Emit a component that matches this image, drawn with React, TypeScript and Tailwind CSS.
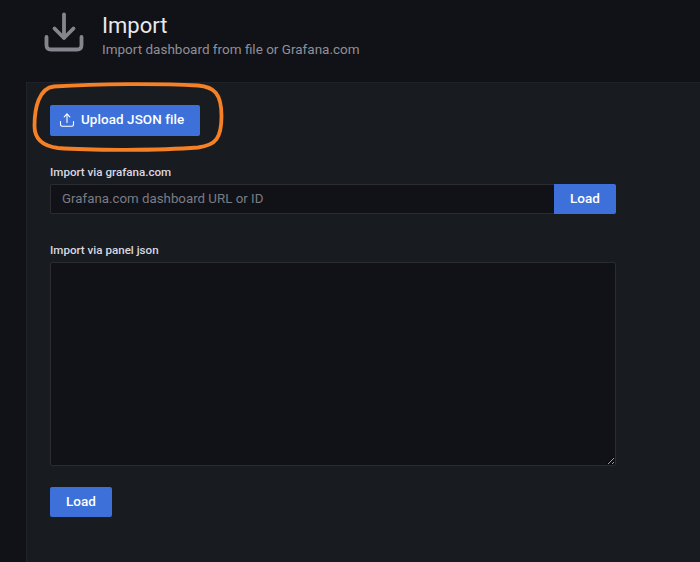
import React from 'react';

const Header = () => (
  <div className="h-[82px] flex items-start bg-[#111217] pl-[44px] pt-[12px]">
    <svg width="40" height="40" viewBox="0 0 40 40" fill="none" stroke="#85858d" strokeWidth="3.8" strokeLinecap="round" strokeLinejoin="round" className="shrink-0">
      <path d="M20 2.5V25.5" />
      <path d="M10.5 16.5L20 26L29.5 16.5" />
      <path d="M2.5 25V33C2.5 36 4 37.5 7 37.5H33C36 37.5 37.5 36 37.5 33V25" />
    </svg>
    <div className="ml-[18px] flex flex-col">
      <h1 className="text-[22px] leading-[28px] font-normal text-[#e8e9ed]">Import</h1>
      <p className="text-[13.5px] leading-[18px] text-[#8e9099]">Import dashboard from file or Grafana.com</p>
    </div>
  </div>
);

const LoadButton = ({ className }: { className: string }) => (
  <button className={`w-[62px] h-[30px] pb-[1px] bg-[#3d71d9] text-white text-[13.5px] font-medium ${className}`}>Load</button>
);

export default function App() {
  return (
    <div className="relative w-[700px] h-[562px] overflow-hidden bg-[#111217] font-['Roboto',sans-serif]">
      <Header />
      <div className="ml-[26px] h-[480px] bg-[#181b1f] border-t border-l border-[#1f2226] pl-[23px] pt-[22px]">
        <button className="w-[150px] h-[31px] flex items-center bg-[#3d71d9] rounded-[2px] pl-[9px] pb-[1px] text-white text-[13.4px] font-medium">
          <svg width="16" height="16" viewBox="0 0 16 16" fill="none" stroke="white" strokeWidth="1.1" strokeLinecap="round" strokeLinejoin="round">
            <path d="M8 2V10.5" />
            <path d="M5.2 4.8L8 2L10.8 4.8" />
            <path d="M1.5 9.5V12.5C1.5 13.6 2.2 14.2 3.2 14.2H12.8C13.8 14.2 14.5 13.6 14.5 12.5V9.5" />
          </svg>
          <span className="ml-[6px] tracking-[0.1px]">Upload JSON file</span>
        </button>

        <label className="block mt-[29px] text-[11.6px] leading-[14px] font-medium text-[#d8d8e2]">Import via grafana.com</label>
        <div className="flex mt-[5px] w-[566px] h-[30px]">
          <div className="flex-1 flex items-center bg-[#111217] border border-[#2a2c31] border-r-0 rounded-l-[2px] pl-[11px] text-[13.3px] text-[#7a7c84]">
            Grafana.com dashboard URL or ID
          </div>
          <LoadButton className="rounded-r-[2px]" />
        </div>

        <label className="block mt-[29px] text-[11.6px] leading-[14px] font-medium text-[#d8d8e2]">Import via panel json</label>
        <textarea className="block mt-[5px] w-[566px] h-[204px] bg-[#111217] border border-[#2a2c31] rounded-[2px] outline-none" />

        <LoadButton className="block mt-[21px] rounded-[2px]" />
      </div>

      <svg className="absolute left-[30px] top-[80px] pointer-events-none" width="196" height="74" viewBox="0 0 196 74" fill="none">
        <path d="M24 6.5C70 3.5 130 3.5 168 5.5C184 7 191.5 13 191.5 36C191.5 58 186 65 168 67.5C130 70.5 60 70.5 28 68C12 66 4.5 58 4.5 46C4.5 28 9 8 24 6.5Z" stroke="#f58025" strokeWidth="3.8" />
      </svg>
    </div>
  );
}
